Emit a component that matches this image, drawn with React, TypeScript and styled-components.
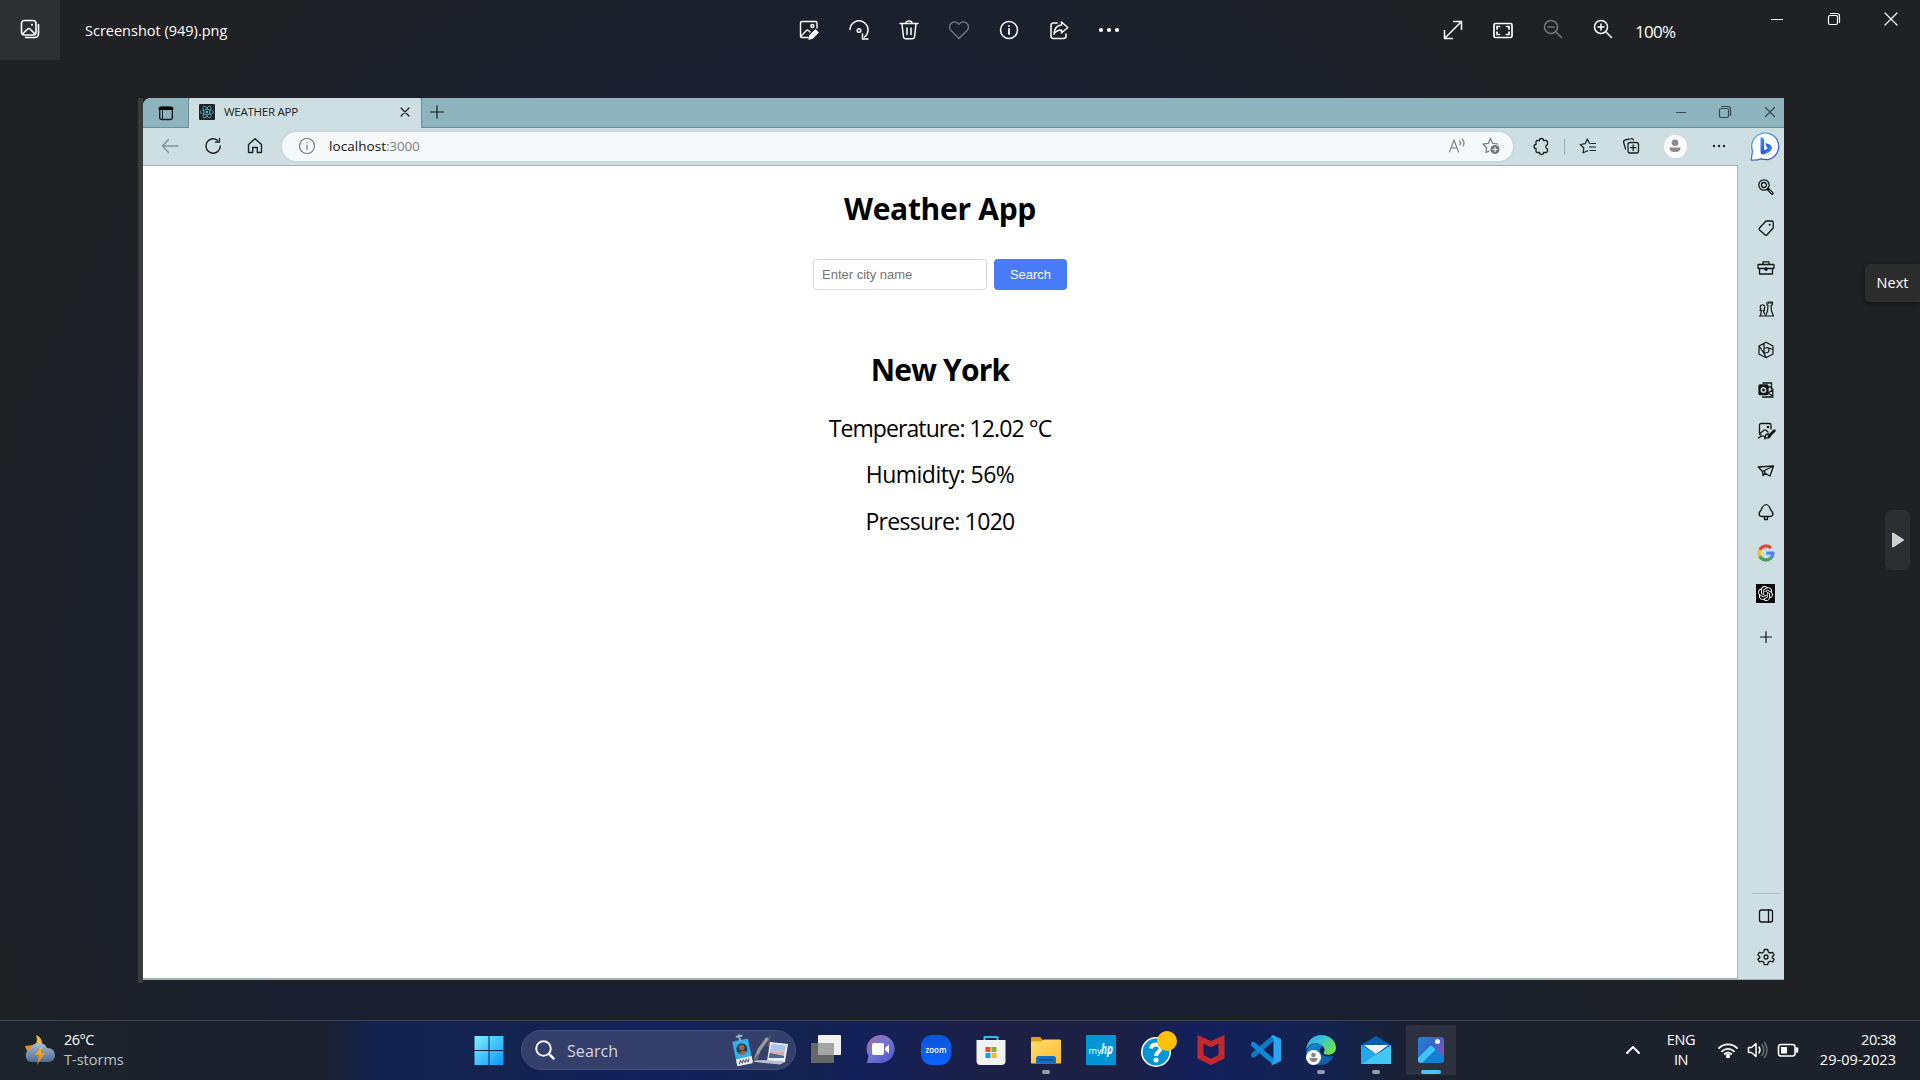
import React from 'react';
import styled, { createGlobalStyle } from 'styled-components';
import { SiReact, SiOpenai } from 'react-icons/si';

const Global = createGlobalStyle`
  * { box-sizing: border-box; }
  html, body { margin: 0; padding: 0; background: #202124; }
  body { width: 1920px; height: 1080px; overflow: hidden; font-family: "Open Sans", "Noto Sans", sans-serif; }
  h1, h2, p { margin: 0; }
`;

const Screen = styled.div`
  width: 1920px;
  height: 1080px;
  display: flex;
  flex-direction: column;
  color: #fff;
  background:
    radial-gradient(ellipse 900px 900px at 850px 700px, #1a2032 0%, #1a2030 70%, rgba(26, 32, 48, 0) 100%),
    linear-gradient(90deg, #202124 0, #202124 1920px);
`;

const Label = styled.span<{ $size: number; $track?: number; $color?: string; $line?: number }>`
  font-size: ${p => p.$size}px;
  letter-spacing: ${p => p.$track ?? 0}px;
  color: ${p => p.$color ?? '#fff'};
  line-height: ${p => p.$line ?? 20}px;
  white-space: nowrap;
`;

const Glyph = styled.svg<{ $dim?: boolean }>`
  display: block;
  flex: none;
  fill: none;
  stroke: currentColor;
  stroke-linecap: round;
  stroke-linejoin: round;
  opacity: ${p => (p.$dim ? 0.38 : 1)};
`;

/* Icons are drawn around a centred origin, one unit per pixel. */
function Icon({ s = 24, w = 1.5, dim, children }: { s?: number; w?: number; dim?: boolean; children: React.ReactNode }) {
  return (
    <Glyph $dim={dim} width={s} height={s} viewBox={`${-s / 2} ${-s / 2} ${s} ${s}`} strokeWidth={w}>
      {children}
    </Glyph>
  );
}

/* ---------- Photo viewer header ---------- */
const Header = styled.header`
  height: 60px;
  display: flex;
  align-items: stretch;
`;
const AppButton = styled.div`
  width: 60px;
  padding-bottom: 2px;
  background: #2e2f32;
  display: flex;
  align-items: center;
  justify-content: center;
`;
const FileName = styled.div`
  width: 724px;
  padding: 19px 0 0 25px;
`;
const Cells = styled.div<{ $width: number; $drop?: number }>`
  width: ${p => p.$width}px;
  padding-top: ${p => p.$drop ?? 0}px;
  display: grid;
  grid-auto-flow: column;
  grid-auto-columns: 50px;
  place-items: center;
`;
const ZoomLevel = styled.div`
  width: 120px;
  padding: 21px 0 0 7px;
`;
const WindowButtons = styled.div<{ $cell: number; $height: number; $color: string; $bleed?: number }>`
  height: ${p => p.$height}px;
  margin-right: ${p => -(p.$bleed ?? 0)}px;
  display: grid;
  grid-template-columns: repeat(3, ${p => p.$cell}px);
  place-items: center;
  color: ${p => p.$color};
`;

/* ---------- Canvas ---------- */
const Canvas = styled.main`
  flex: 1;
  display: flex;
  align-items: flex-start;
  padding: 38px 0 0 138px;
`;
const Photo = styled.div`
  width: 1646px;
  height: 885px;
  padding-left: 5px;
  background: linear-gradient(90deg, #3b3b3b 5px, #202326 5px);
`;
const Browser = styled.div`
  height: 882px;
  border-radius: 8px 0 0 0;
  overflow: hidden;
  display: flex;
  flex-direction: column;
  background: #cedfe3;
  color: #1b1f21;
`;
const TabStrip = styled.div`
  height: 30px;
  display: flex;
  background: #8db4bc;
  box-shadow: inset 0 -1px 0 #6c9096;
`;
const TabMenu = styled.div`
  width: 46px;
  padding-bottom: 1px;
  display: flex;
  align-items: center;
  justify-content: center;
  border-right: 1px solid #6c9096;
  border-radius: 0 0 3px 0;
`;
const Tab = styled.div`
  width: 232px;
  display: flex;
  align-items: center;
  padding: 0 8px 2px 10px;
  background: #cedfe3;
  border-radius: 3px 3px 0 0;
`;
const Favicon = styled.div`
  width: 16px;
  height: 16px;
  margin-right: 9px;
  display: grid;
  place-items: center;
  background: #20232a;
  color: #61b4cc;
  border-radius: 1px;
`;
const TabTitle = styled.div`
  flex: 1;
  display: flex;
`;
const NewTab = styled.div`
  flex: 1;
  padding: 0 0 2px 3px;
  display: flex;
  align-items: center;
  border-left: 1px solid #6c9096;
  border-radius: 0 0 0 3px;
`;
const Toolbar = styled.div`
  height: 37px;
  display: flex;
  align-items: center;
  padding: 0 0 1px 6px;
`;
const Tool = styled.div<{ $w: number; $color?: string }>`
  width: ${p => p.$w}px;
  flex: none;
  display: flex;
  justify-content: center;
  color: ${p => p.$color ?? '#1b1f21'};
`;
const Address = styled.div`
  flex: none;
  width: 1231px;
  height: 29px;
  margin: 0 6px;
  padding: 0 5px 0 9px;
  display: flex;
  align-items: center;
  border-radius: 15px;
  background: #f5f9fa;
  box-shadow: 0 0 3px rgba(90, 140, 150, 0.25);
`;
const Url = styled.div`
  flex: 1;
  padding-left: 6px;
  display: flex;
`;
const Divider = styled.div`
  width: 1px;
  height: 15px;
  background: #9fb0b4;
`;
const Avatar = styled.div`
  width: 23px;
  height: 23px;
  border-radius: 50%;
  background: #fbfbfb;
  color: #8b8b8b;
  display: grid;
  place-items: center;
`;
const Body = styled.div`
  flex: 1;
  display: flex;
`;
const Page = styled.div`
  width: 1595px;
  background: #fff;
  border: solid #a3b1b0;
  border-width: 1px 1px 2px 0;
  border-right-color: #abb9bb;
  color: #000;
  display: flex;
  flex-direction: column;
  align-items: center;
`;
const Title = styled.h1<{ $top: number; $track: number }>`
  margin-top: ${p => p.$top}px;
  font-size: 30px;
  line-height: 41px;
  font-weight: 700;
  letter-spacing: ${p => p.$track}px;
`;
const SearchForm = styled.form`
  margin-top: 30px;
  display: flex;
  gap: 7px;
`;
const CityInput = styled.input`
  width: 174px;
  height: 31px;
  padding: 0 8px;
  border: 1px solid #d8d8d8;
  border-radius: 4px;
  outline: none;
  font: 13px "Liberation Sans", Arial, sans-serif;
  &::placeholder { color: #757575; opacity: 1; }
`;
const SubmitButton = styled.button`
  width: 73px;
  height: 31px;
  padding: 0;
  border: 0;
  border-radius: 4px;
  background: #487bf8;
  color: #fff;
  font: 13px "Liberation Sans", Arial, sans-serif;
`;
const Readings = styled.section`
  margin-top: 15px;
`;
const Reading = styled.p<{ $track: number }>`
  font-size: 23px;
  line-height: 46.4px;
  letter-spacing: ${p => p.$track}px;
  text-align: center;
`;
const Sidebar = styled.aside`
  flex: 1;
  padding: 2px 0 2px 9px;
  display: flex;
  flex-direction: column;
  align-items: center;
  color: #111516;
  border-bottom: 1px solid #a3b1b0;
`;
const SideItem = styled.div<{ $h?: number }>`
  height: ${p => p.$h ?? 40.6}px;
  display: flex;
  align-items: center;
`;
const SideRule = styled.div`
  width: 27px;
  height: 1px;
  margin-top: auto;
  margin-bottom: 2px;
  background: #aebfc3;
`;
const SideTile = styled.div`
  width: 19px;
  height: 19px;
  display: grid;
  place-items: center;
  background: #000;
  color: #fff;
`;

/* ---------- Next control, floating over the canvas ---------- */
const Tooltip = styled.div`
  position: absolute;
  left: 1865px;
  top: 264px;
  width: 55px;
  height: 38px;
  display: grid;
  place-items: center;
  border-radius: 5px 0 0 5px;
  background: #2c2c2d;
  box-shadow: 0 2px 5px rgba(0, 0, 0, 0.4);
`;
const NextButton = styled.div`
  position: absolute;
  left: 1885px;
  top: 510px;
  width: 25px;
  height: 60px;
  display: grid;
  place-items: center;
  border-radius: 6px;
  background: #2d2e31;
  color: #cfcfcf;
`;

/* ---------- Taskbar ---------- */
const Taskbar = styled.footer`
  height: 60px;
  display: flex;
  align-items: stretch;
  border-top: 1px solid #42454c;
  background: linear-gradient(90deg, #1d232c 0, #1b212d 320px, #132350 375px, #14234f 480px, #14205c 660px, #14234f 800px, #14205a 860px, #1b2044 1000px, #1b2044 1120px, #14205c 1200px, #13234f 1330px, #1b202f 1420px, #1c212c 1500px, #1d212b 1920px);
`;
const Weather = styled.div`
  width: 461px;
  padding: 0 0 2px 24px;
  display: flex;
  align-items: center;
  gap: 8px;
`;
const Stack = styled.div<{ $align?: string }>`
  display: flex;
  flex-direction: column;
  align-items: ${p => p.$align ?? 'flex-start'};
`;
const TaskItem = styled.div<{ $active?: boolean; $running?: boolean }>`
  width: 55px;
  display: grid;
  grid-template-rows: 50px 4px;
  align-content: start;
  justify-items: center;
  padding-top: 4px;
  background: ${p => (p.$active ? 'linear-gradient(rgba(255,255,255,.08), rgba(255,255,255,.08)) 3px 4px / 50px 50px no-repeat' : 'none')};
  & > svg { margin-top: 5px; }
  &::after {
    content: '';
    width: ${p => (p.$active ? 20 : 8)}px;
    height: 4px;
    margin-top: -5px;
    border-radius: 2px;
    background: ${p => (p.$active ? '#4cc2ff' : p.$running ? '#989bac' : 'transparent')};
  }
`;
const SearchBox = styled.div`
  width: 275px;
  height: 40px;
  margin: 9px 2px 0 5px;
  padding: 0 6px 0 12px;
  display: flex;
  align-items: center;
  border-radius: 20px;
  border: 1px solid #46507a;
  background: #343f6b;
  color: #f0f0f5;
`;
const SearchText = styled.div`
  flex: 1;
  padding: 1px 0 0 11px;
`;
const Tray = styled.div`
  flex: 1;
  display: flex;
  align-items: center;
  justify-content: flex-end;
  padding: 0 24px 1px 0;
`;
const TrayCell = styled.div<{ $w: number; $end?: boolean }>`
  width: ${p => p.$w}px;
  display: flex;
  justify-content: ${p => (p.$end ? 'flex-end' : 'center')};
`;

const RestoreGlyph = ({ s = 14 }: { s?: number }) => (
  <Icon s={s} w={1.2}><rect x={-5.5} y={-3.5} width={9} height={9} rx={1.5} /><path d="M-3.5-5.5H3a2.5 2.5 0 0 1 2.500 2.500V3.500" /></Icon>
);
const CloseGlyph = ({ r = 6 }: { r?: number }) => (
  <Icon s={16} w={1.2}><path d={`M${-r} ${-r}L${r} ${r}M${r} ${-r}L${-r} ${r}`} /></Icon>
);

const HeaderActions = () => (
  <Cells $width={644}>
    <Icon w={1.4}>
      <path d="M-1 7.500H-7A1.500 1.500 0 0 1-8.500 6V-7A1.500 1.500 0 0 1-7-8.500H6.500A1.500 1.500 0 0 1 8-7V-2" />
      <path d="M-8 6L-2.500.5Q-1.500-.4-.5.5L1 2" /><circle cx={3.300} cy={-4} r={1.500} />
      <path fill="currentColor" d="M0 9L1 5.500 6.500 0 9 2.500 3.500 8Z" />
    </Icon>
    <Icon w={1.500}><path d="M-9-.5A9 9 0 1 1 5.500 7M3.500 4V9H9" /><circle r={1.800} cy={.5} /></Icon>
    <Icon w={1.500}><path d="M-9-6.500H9M-3-7Q-3-9 0-9T3-7M-7-6L-5.500 7Q-5.300 8.800-3.500 8.800H3.500Q5.300 8.800 5.500 7L7-6M-2-2V4.500M2-2V4.500" /></Icon>
    <Icon dim w={1.500}><path d="M0 8.500L-8 .5A5 5 0 0 1-1-6.700L0-5.700 1-6.700A5 5 0 0 1 8 .5Z" /></Icon>
    <Icon w={1.500}><circle r={8.500} /><path d="M0-1V4M0-4V-3.900" strokeWidth={1.800} /></Icon>
    <Icon w={1.500}>
      <path d="M-2-7H-5.500A2.500 2.500 0 0 0-8-4.500V6A2.500 2.500 0 0 0-5.500 8.500H4.500A2.500 2.500 0 0 0 7 6V4" />
      <path d="M2.500-8L8.800-2.500 2.500 3V0Q-3 0-5 4.200-4.500-4.500 2.500-5Z" />
    </Icon>
    <Icon><g fill="currentColor" stroke="none"><circle cx={-8} r={2.100} /><circle r={2.100} /><circle cx={8} r={2.100} /></g></Icon>
  </Cells>
);

const ViewActions = () => (
  <Cells $width={200}>
    <Icon w={1.500}><path d="M-8 8L8-8M0-8.500H8.500V0M-8.500 0V8.500H0" strokeLinecap="butt" /></Icon>
    <Icon w={1.700}><rect x={-9} y={-6.500} width={18} height={14} rx={1.500} /><path d="M-6-1V-3.500H-3.500M3.500-3.500H6V-1M6 2V4.500H3.500M-3.500 4.500H-6V2" /></Icon>
    <Icon dim w={1.500}><circle cx={-2} cy={-3} r={6.500} /><path d="M3 2L8.500 7.500M-5-3H1" /></Icon>
    <Icon w={1.500}><circle cx={-2} cy={-3} r={6.500} /><path d="M3 2L8.500 7.500M-5-3H1M-2-6V0" /></Icon>
  </Cells>
);

const BrowserTools = () => (
  <>
    <Tool $w={43}>
      <Icon s={20} w={1.300}><path d="M-1.500-5.500A2 2 0 0 1 2.500-5.500H5A1.500 1.500 0 0 1 6.500-4V-1.500A2.200 2.200 0 0 0 6.500 2.800V5A1.500 1.500 0 0 1 5 6.500H2.500A2 2 0 0 1-1.500 6.500H-3.500A1.500 1.500 0 0 1-5 5V2.500A2 2 0 0 1-5-1.500V-4A1.500 1.500 0 0 1-3.500-5.500Z" /></Icon>
    </Tool>
    <Tool $w={4}><Divider /></Tool>
    <Tool $w={44}>
      <Icon s={20} w={1.200}><path d="M-.2 4.800L-5 6.800-4.200 2-7.700-1.500-2.900-2.300-.7-6.900 1.500-2.500M3-2.500H7.500M1.500 1H7.500M2 4.500H7.500" /></Icon>
    </Tool>
    <Tool $w={42}>
      <Icon s={20} w={1.300}><rect x={-3} y={-3.500} width={10.500} height={10.500} rx={2} /><path d="M-.5 1.700H5M2.200-1V4.500M-5.500 3L-7.300-3.500A2 2 0 0 1-6-6L0-7.300A2 2 0 0 1 2.500-6" /></Icon>
    </Tool>
    <Tool $w={46}>
      <Avatar><Icon s={16} w={0}><g fill="currentColor"><circle cy={-3.300} r={3.300} /><path d="M-5.500 1.500H5.500Q5.500 6 0 6T-5.500 1.500Z" /></g></Icon></Avatar>
    </Tool>
    <Tool $w={42}><Icon s={16} w={0}><g fill="currentColor"><circle cx={-5} r={1.200} /><circle r={1.200} /><circle cx={5} r={1.200} /></g></Icon></Tool>
    <Tool $w={50}>
      <Icon s={30} w={1.300}>
        <defs>
          <linearGradient id="bubble" x1="0" y1="0" x2="0.7" y2="1"><stop offset="0" stopColor="#54c1ec" /><stop offset="1" stopColor="#3c49c7" /></linearGradient>
          <linearGradient id="bing" x1="0" y1="0" x2="1" y2="1"><stop offset="0" stopColor="#3aa0f5" /><stop offset=".55" stopColor="#2f55dd" /><stop offset="1" stopColor="#38bdf0" /></linearGradient>
        </defs>
        <path fill="#fff" stroke="url(#bubble)" d="M-13.800 14L-12.500 5A13.500 13.500 0 1 1 3 13.600Q-2 13.500-4 12.800-8 14.500-13.800 14Z" />
        <path fill="url(#bing)" stroke="none" d="M-4.500-8.800Q-.8-8.500-.8-5.500V4.500L2.800 2.300Q1 0 .3-3 7.500-1.500 7 2.500 6.500 6-1 8.300-4.500 9-4.500 5Z" />
      </Icon>
    </Tool>
  </>
);

const SidebarIcons = () => (
  <>
    <SideItem><Icon s={20} w={1.300}><circle cx={-2} cy={-2} r={5.200} /><circle cx={-2} cy={-2} r={2.500} /><path d="M2 2.200L6.300 6.300" strokeWidth={3} /><path d="M3.500 3.600L6 6" stroke="#cedfe3" strokeWidth={1} /></Icon></SideItem>
    <SideItem><Icon s={20} w={1.300}><path d="M0-7H6A1.200 1.200 0 0 1 7.200-6V0L.8 7Q0 7.800-.8 7L-6.500 2Q-7.400 1-6.500 0Z" /><circle cx={3.600} cy={-3.300} r={1} fill="currentColor" stroke="none" /></Icon></SideItem>
    <SideItem><Icon s={20} w={1.300}><rect x={-8} y={-3.500} width={16} height={4} rx={.5} /><path d="M-6.500.5V6H6.500V.5M-3-4V-6.200H3V-4" /><circle r={1.200} cy={1} fill="currentColor" /></Icon></SideItem>
    <SideItem><Icon s={20} w={1.200}><path d="M-6.800 7H-.5M-5.300 7Q-5.300 4-4.500 1.500H-6L-5-.2A2.300 2.300 0 1 1-2-.2L-1.300 1.500H-2.800L-1.500 5M1-7V-4.500L2-3.500 1.500 2-.5 7H7.500L5.500 2 5-3.500 6.500-4.500V-7H5V-5.500M2.800-7V-5.500M4.500-7H2.500" /></Icon></SideItem>
    <SideItem><Icon s={20} w={1.200}><path d="M0-7.800L7-4V4L0 7.800-7 4V-4ZM-2-6.500V3.500L0 7M-2-1.500L1.500-2.500 6.500-.5M-2 3.500L2.500 2 3-1.500M-6.500-3.500L-2 3.500" /></Icon></SideItem>
    <SideItem><Icon s={20} w={1.300}><path d="M-3-7H5.500V-1M1-3H5.500M6.800-1V7H-3.500M6.800 0L2 3 6.800 6" /><rect x={-7} y={-5} width={9} height={9.500} rx={1} fill="currentColor" /><circle cx={-2.500} cy={0} r={2.200} stroke="#cedfe3" strokeWidth={1.400} /></Icon></SideItem>
    <SideItem><Icon s={20} w={1.300}><path d="M5-2V-6A1.500 1.500 0 0 0 3.500-7.500H-5A1.500 1.500 0 0 0-6.500-6V2.500Q-6.500 4-5 4M-6 2.500L-2-.8Q-1-1.500 0-.8L2 1" /><circle cx={2} cy={-4} r={.7} fill="currentColor" /><path d="M8.300-.3L3 5" strokeWidth={2.800} /><path d="M2.500 3Q-1 3-.8 6 1.500 8.500 4.500 5.200M-7.700 7Q-4 4.500-2.500 5T-1 8" /></Icon></SideItem>
    <SideItem><Icon s={20} w={1.300}><path d="M-7.800-4L7.500-5 4 5-1 2.200-1.500-.5 7.500-5-3.500.5-7.800-4M-3.500.5L-3 4.500-1 2.200" /></Icon></SideItem>
    <SideItem><Icon s={20} w={1.300}><path d="M0-7.500Q3.500-6.500 4.500-2.500 7 0 7 2.500 6.500 4.500 4 4.500H-4Q-6.500 4.500-7 2.500-7 0-4.500-2.500-3.500-6.500 0-7.500ZM-1.500 5V7.500H1.500V5" /></Icon></SideItem>
    <SideItem>
      <Icon s={20} w={3.300}>
        <g strokeLinecap="butt"><path stroke="#dc4b3e" d="M5-5A7 7 0 0 0-6.200-3.200" /><path stroke="#f4bd2f" d="M-6.100-3.400A7 7 0 0 0-6.100 3.400" /><path stroke="#4ba35a" d="M-6.200 3.200A7 7 0 0 0 4.600 5.300" /><path stroke="#5383ec" d="M4.400 5.400A7 7 0 0 0 7 .2H.2" /></g>
      </Icon>
    </SideItem>
    <SideItem><SideTile><SiOpenai size={15} /></SideTile></SideItem>
    <SideItem $h={47}><Icon s={16} w={1.200}><path d="M-5.500 0H5.500M0-5.500V5.500" /></Icon></SideItem>
    <SideRule />
    <SideItem><Icon s={20} w={1.300}><rect x={-6.500} y={-6} width={13} height={12} rx={2} /><path d="M2.500-6V6" /></Icon></SideItem>
    <SideItem><Icon s={20} w={1.300}><path d="M-1.700-7.500H1.700L2.400-4.900 4-4 6.600-4.700 8.100-2 6.200-.1V.7L8.100 2.200 6.600 5 4 4.200 2.400 5.100 1.700 7.700H-1.700L-2.400 5.100-4 4.200-6.600 5-8.100 2.200-6.200.7V-.1L-8.100-2-6.600-4.700-4-4-2.400-4.900Z" /><circle r={2} /></Icon></SideItem>
  </>
);

const TaskApps = () => (
  <>
    <TaskItem>
      <Icon s={40} w={0}><rect x={-15} y={-7} width={23} height={20} rx={1} fill="#666769" /><rect x={-8} y={-15} width={23} height={20} rx={1} fill="#f1f1f1" /><rect x={-8} y={-7} width={16} height={12} fill="#a5a5a6" /></Icon>
    </TaskItem>
    <TaskItem>
      <Icon s={40} w={0}>
        <defs><linearGradient id="chat" x1="0" y1="0" x2=".8" y2="1"><stop offset="0" stopColor="#a66ba4" /><stop offset=".5" stopColor="#7476d2" /><stop offset="1" stopColor="#5059c9" /></linearGradient></defs>
        <path fill="url(#chat)" d="M-14 13L-12.500 6A14 14 0 1 1 0 13Z" /><rect x={-9} y={-7} width={12} height={12} rx={2} fill="#fff" /><path fill="#fff" d="M4-2L8-5.500V3.500L4 0Z" />
      </Icon>
    </TaskItem>
    <TaskItem>
      <Icon s={40} w={0}>
        <defs><linearGradient id="zoomBg" x1="0" y1="0" x2="0" y2="1"><stop offset="0" stopColor="#0955d8" /><stop offset="1" stopColor="#0b63ff" /></linearGradient></defs>
        <rect x={-15} y={-15} width={30} height={30} rx={11} fill="url(#zoomBg)" />
        <text x={0} y={2.500} textAnchor="middle" fill="#fff" fontSize={8.500} fontWeight={600} textLength={21} lengthAdjust="spacingAndGlyphs">zoom</text>
      </Icon>
    </TaskItem>
    <TaskItem>
      <Icon s={40} w={0}>
        <path d="M-6.500-9V-13H6.500V-9" stroke="#35bdf0" strokeWidth={2} fill="none" /><path fill="#f2f2f2" d="M-14.500-10H14.500V11Q14.500 15 10.500 15H-10.500Q-14.500 15-14.500 11Z" />
        <rect x={-5.500} y={-3} width={5} height={5} fill="#e6502b" /><rect x={.5} y={-3} width={5} height={5} fill="#7ab51d" /><rect x={-5.500} y={3} width={5} height={5} fill="#139fe0" /><rect x={.5} y={3} width={5} height={5} fill="#fbb812" />
      </Icon>
    </TaskItem>
    <TaskItem $running>
      <Icon s={40} w={0}>
        <defs><linearGradient id="folder" x1="0" y1="0" x2="1" y2="1"><stop offset="0" stopColor="#ffdc73" /><stop offset="1" stopColor="#fcbc27" /></linearGradient></defs>
        <path fill="#dfa00c" d="M-15-12Q-15-13-14-13H-6L-3-10H15V0H-15Z" /><path fill="url(#folder)" d="M-15-8.500H-5L-2-10.500H14L15-9.500V13.500H-15Z" />
        <path fill="#0f70c5" d="M-10 13.500V8.500Q-10 6-7.500 6H7.500Q10 6 10 8.500V13.500Z" /><rect x={-7} y={9} width={14} height={1.500} fill="#0a4d94" />
      </Icon>
    </TaskItem>
    <TaskItem>
      <Icon s={40} w={0}>
        <rect x={-15} y={-15} width={30} height={30} rx={1} fill="#0096d6" />
        <text x={-12.500} y={3.500} fill="#fff" fontSize={9.500} textLength={13} lengthAdjust="spacingAndGlyphs">my</text>
        <text x={0} y={4} fill="#fff" fontSize={15} fontStyle="italic" fontWeight={700} textLength={12} lengthAdjust="spacingAndGlyphs">hp</text>
      </Icon>
    </TaskItem>
    <TaskItem>
      <Icon s={44} w={0}>
        <circle r={14.200} fill="#0096d6" stroke="#fff" strokeWidth={1.600} />
        <path d="M-5-3.500Q-4.500-7.500 0-7.500T4.500-3.500C4.500-.5 0 0 0 4" stroke="#fff" strokeWidth={4} strokeLinecap="butt" fill="none" /><circle cy={8} r={2.500} fill="#fff" />
        <circle cx={11} cy={-11} r={10} fill="#fdc10c" />
      </Icon>
    </TaskItem>
    <TaskItem><Icon s={40} w={0}><path fill="#c2282d" d="M-13.500-15L0-9 13.500-15V8.500L0 15-13.500 8.500ZM-7.500-6.500V5L0 8.800 7.500 5V-6.500L0-2.800Z" fillRule="evenodd" /></Icon></TaskItem>
    <TaskItem>
      <Icon s={40} w={0}><path stroke="#0a79c6" strokeWidth={5} d="M-12.500 5L6-11" /><path stroke="#0b8ad8" strokeWidth={5} d="M-12.500-5.500L6 10.500" /><path fill="#2aa5f0" d="M7-15L15-11V11L7 15 5 14 7.500 11V-11L5-14Z" /></Icon>
    </TaskItem>
    <TaskItem $running>
      <Icon s={40} w={0}>
        <defs>
          <linearGradient id="edgeTop" x1="0" y1="0" x2="1" y2=".5"><stop offset="0" stopColor="#2aa6e3" /><stop offset=".5" stopColor="#35c1d8" /><stop offset="1" stopColor="#6be34f" /></linearGradient>
          <linearGradient id="edgeLow" x1="0" y1="0" x2="1" y2="1"><stop offset="0" stopColor="#1b8fd8" /><stop offset="1" stopColor="#0c4f9e" /></linearGradient>
        </defs>
        <path fill="url(#edgeLow)" d="M-15 2A13 13 0 0 1 4-5Q-2-3-1 2 1 8 13 6 8 15 0 15-12 14.500-15 2Z" />
        <path fill="url(#edgeTop)" d="M-15 0C-14-10-7-15 0-15 9-15 15-9 15-2 15 4 8 6 3 4 2 3 4 2 3.500-1 2-6-4-8-9-6-13-4-15 0-15 0Z" />
        <circle cx={-7.500} cy={7.500} r={7.500} fill="#fff" /><circle cx={-7.500} cy={5} r={2.300} fill="#858585" /><path fill="#858585" d="M-11.500 8H-3.500Q-4 12-7.500 12T-11.500 8Z" />
      </Icon>
    </TaskItem>
    <TaskItem $running>
      <Icon s={40} w={0}><path fill="#0a5cad" d="M-15-5L0-14 15-5V5H-15Z" /><path fill="#1b9ae3" d="M-15-5L0 4.500-15 14Z" /><path fill="#22a9ea" d="M-15-5L0 4 15 14H-15Z" /><path fill="#41c7f5" d="M15-5L-14 14H15Z" /><path fill="#f0f0f0" d="M-12.500-5H12.500L0 4Z" /></Icon>
    </TaskItem>
    <TaskItem $active>
      <Icon s={40} w={0}>
        <defs>
          <linearGradient id="photos" x1="0" y1="0" x2="1" y2=".6"><stop offset="0" stopColor="#1b86dc" /><stop offset=".6" stopColor="#3c62c4" /><stop offset="1" stopColor="#8b55b5" /></linearGradient>
          <clipPath id="photoFrame"><rect x={-13} y={-13} width={26} height={26} rx={3} /></clipPath>
        </defs>
        <g clipPath="url(#photoFrame)">
          <rect x={-13} y={-13} width={26} height={26} fill="url(#photos)" />
          <path fill="#1380d6" d="M-9 13L2-4.500 14 8V13Z" />
          <path fill="#42c5f2" d="M-13 8L-1.500-3.500Q0-5 1.500-3.500L4.500-.5-9 13H-13Z" />
        </g>
        <circle cx={6.500} cy={-8.500} r={2.500} fill="#eef3ff" />
      </Icon>
    </TaskItem>
  </>
);

export default function App() {
  return (
    <Screen>
      <Global />
      <Header>
        <AppButton>
          <Icon w={1.600}><rect x={-8.500} y={-8.500} width={14.500} height={14.500} rx={3} /><circle cx={2} cy={-4.300} r={1} fill="currentColor" stroke="none" /><path d="M-7.500 5L-2.300 0Q-1.200-1 0 0L5 5M8.500-4.500V4.500Q8.500 8.500 4.500 8.500H-4.500" /></Icon>
        </AppButton>
        <FileName><Label $size={14.500}>Screenshot (949).png</Label></FileName>
        <HeaderActions />
        <ViewActions />
        <ZoomLevel><Label $size={17} $track={-0.700} $line={21}>100%</Label></ZoomLevel>
        <WindowButtons $cell={57.200} $height={38} $color="#fff">
          <Icon s={16} w={1.200}><path d="M-5.500.5H5.500" /></Icon>
          <RestoreGlyph />
          <CloseGlyph />
        </WindowButtons>
      </Header>

      <Canvas>
        <Photo>
          <Browser>
            <TabStrip>
              <TabMenu><Icon s={16} w={1.400}><rect x={-6.300} y={-6} width={12.600} height={12.500} rx={2} /><path d="M-6-4.500H6" strokeWidth={3} stroke="#000" /><path d="M-3.500-3V6" strokeWidth={1} /></Icon></TabMenu>
              <Tab>
                <Favicon><SiReact size={14} /></Favicon>
                <TabTitle><Label $size={11.500} $track={-0.250} $color="#1b1f21">WEATHER APP</Label></TabTitle>
                <CloseGlyph r={4} />
              </Tab>
              <NewTab><Icon s={24} w={1.200}><path d="M-6.500 0H6.500M0-6.500V6.500" /></Icon></NewTab>
              <WindowButtons $cell={44.500} $height={28} $color="#37494d" $bleed={8}>
                <Icon s={16} w={1}><path d="M-4.500.5H4.500" /></Icon>
                <RestoreGlyph />
                <CloseGlyph r={4.500} />
              </WindowButtons>
            </TabStrip>
            <Toolbar>
              <Tool $w={42} $color="#7f9296"><Icon s={20} w={1.300}><path d="M8 0H-7.500M-1.500-6.500L-7.500 0-1.500 6.500" /></Icon></Tool>
              <Tool $w={43}><Icon s={20} w={1.400}><path d="M4.500-5.700A7.200 7.200 0 1 0 7.300 0M2.500-4H6.500V-7.500" /></Icon></Tool>
              <Tool $w={42}><Icon s={20} w={1.400}><path d="M-6.500 6V-1.500L0-7.200 6.500-1.500V6Q6.500 6.500 6 6.500H2.300V1.500H-2.300V6.500H-6Q-6.500 6.500-6.500 6Z" /></Icon></Tool>
              <Address>
                <Tool $w={32} $color="#72797b"><Icon s={20} w={1.200}><circle r={7.500} /><path d="M0-.8V3.500M0-3.500V-3.300" /></Icon></Tool>
                <Url><Label $size={13.500} $track={0.050} $color="#111">localhost</Label><Label $size={13.500} $track={-0.200} $color="#7b8081">:3000</Label></Url>
                <Tool $w={35} $color="#7c8183"><Icon s={20} w={1.200}><path d="M-7.500 6L-3-6 1.500 6M-6 2H0M2.500-5Q4.500-3 3-1M5-7Q8.500-3.500 6 0" /></Icon></Tool>
                <Tool $w={34} $color="#70767a"><Icon s={20} w={1.200}><path d="M-2 5L-5 6.500-4.300 2-8-2-2.800-2.600-.5-7.500 1.800-2.600 7-2" /><circle cx={4} cy={3.500} r={4.500} fill="currentColor" stroke="none" /><path d="M2 3.500H6M4 1.500V5.500" stroke="#fff" /></Icon></Tool>
              </Address>
              <BrowserTools />
            </Toolbar>
            <Body>
              <Page>
                <Title $top={22} $track={-0.300}>Weather App</Title>
                <SearchForm>
                  <CityInput placeholder="Enter city name" />
                  <SubmitButton type="button">Search</SubmitButton>
                </SearchForm>
                <Title as="h2" $top={59} $track={-0.800}>New York</Title>
                <Readings>
                  <Reading $track={-0.900}>Temperature: 12.02 °C</Reading>
                  <Reading $track={-0.500}>Humidity: 56%</Reading>
                  <Reading $track={-0.720}>Pressure: 1020</Reading>
                </Readings>
              </Page>
              <Sidebar><SidebarIcons /></Sidebar>
            </Body>
          </Browser>
        </Photo>
      </Canvas>

      <Tooltip><Label $size={14.500}>Next</Label></Tooltip>
      <NextButton><Icon s={16} w={2}><path fill="currentColor" d="M-5-6.500L5 0-5 6.500Z" /></Icon></NextButton>

      <Taskbar>
        <Weather>
          <Icon s={32} w={0}>
            <defs><linearGradient id="cloud" x1="0" y1="0" x2="0" y2="1"><stop offset="0" stopColor="#a9bdd0" /><stop offset="1" stopColor="#4a6f98" /></linearGradient><linearGradient id="bolt" x1="0" y1="0" x2="0" y2="1"><stop offset="0" stopColor="#fcc02c" /><stop offset="1" stopColor="#ee6c0c" /></linearGradient></defs>
            <path fill="#f6b735" d="M-4-15Q2-13 2-6L-3-3H-7Q-1-8-4-15Z" /><path fill="#f08a1c" d="M-15-4L-7-5-9 3-13 1Z" /><path fill="url(#cloud)" d="M-9 12A6.500 6.500 0 0 1-10-.5Q-8-7-1-7 5-7 7-2 15-2 15 5.500 14.500 12 8 12Z" /><path fill="url(#bolt)" d="M2-4L-5 5H-1L-3 15 5 3H1Z" />
          </Icon>
          <Stack><Label $size={14.500} $track={-0.500}>26°C</Label><Label $size={14.500} $track={0} $color="#bfc2c6">T-storms</Label></Stack>
        </Weather>
        <TaskItem>
          <Icon s={40} w={0}>
            <defs><linearGradient id="win" gradientUnits="userSpaceOnUse" x1={-14} y1={-14} x2={14} y2={14}><stop offset="0" stopColor="#7df0ff" /><stop offset="1" stopColor="#0a98fa" /></linearGradient></defs>
            <path fill="url(#win)" d="M-14.500-14H-.5V0H-14.500ZM.5-14H14.500V0H.5ZM-14.500 1H-.5V15H-14.500ZM.5 1H14.500V15H.5Z" />
          </Icon>
        </TaskItem>
        <SearchBox>
          <Icon s={22} w={2}><circle cx={-1.500} cy={-1.500} r={7.300} /><path d="M4 4L8.500 8.500" strokeWidth={2.500} /></Icon>
          <SearchText><Label $size={16} $track={0.100} $color="#d4d6e0">Search</Label></SearchText>
          <Glyph width={58} height={36} viewBox="0 0 58 36" strokeWidth={0}>
            <g transform="rotate(-12 11 20)"><rect x={3.500} y={8} width={16} height={25} rx={1} fill="#35ade9" /><rect x={3.500} y={26} width={16} height={7} fill="#eceff2" /><circle cx={11.500} cy={17} r={5.500} fill="#1d4256" /><circle cx={11.500} cy={15.500} r={2.800} fill="#9d6744" /><path d="M7.500 21Q11.500 17 15.500 21 11.500 25 7.500 21Z" fill="#9d6744" /><path d="M6 31L7.500 28 9 31 10.500 28 12 31 13.500 28 15 31 16.500 28" stroke="#51565d" strokeWidth={1} /><path d="M11.500 8V3M9 4H14" stroke="#9fb0bf" strokeWidth={2} /></g>
            <path d="M25 26L28 18 36 7" stroke="#9a9a9a" strokeWidth={3.500} /><path d="M22 31L27 23M39 4L37 14" stroke="#5c5c5c" strokeWidth={1.500} />
            <path fill="#e9edf4" d="M39 10L57 12 54 30 36 29Z" /><path fill="#a9c6ea" d="M40.500 12L55 13.500 53.500 20 39 19Z" /><path fill="#dcaea6" d="M39 19L53.500 20 53 26 37.800 26Z" /><path fill="#4c6a93" d="M38.500 21L46 22.500 53 24 53 26 37.800 26Z" /><path fill="#b8c0d2" d="M23 28.500L36 28 54 30 49 32.500 24 30Z" />
          </Glyph>
        </SearchBox>
        <TaskApps />
        <Tray>
          <TrayCell $w={50}><Icon w={2}><path d="M-6 3L0-3 6 3" /></Icon></TrayCell>
          <TrayCell $w={46}><Stack $align="center"><Label $size={14.500} $track={-0.400}>ENG</Label><Label $size={14.500} $track={-0.400}>IN</Label></Stack></TrayCell>
          <TrayCell $w={48}><Icon w={1.800}><path d="M-9-2A12.800 12.800 0 0 1 9-2M-6 1.300A8.500 8.500 0 0 1 6 1.300M-3.300 4A5 5 0 0 1 3.300 4" /><circle cy={6} r={1.300} fill="currentColor" /></Icon></TrayCell>
          <TrayCell $w={12}><Icon w={1.500}><path d="M-9.500-2.500H-6.500L-2-6.500V6.500L-6.500 2.500H-9.500ZM1-3Q3 0 1 3" /><path d="M4-5.500Q7.500 0 4 5.500M6.500-7.500Q11.500 0 6.500 7.500" opacity={.35} /></Icon></TrayCell>
          <TrayCell $w={48}><Icon w={1.600}><rect x={-9.500} y={-5.500} width={16.500} height={11.500} rx={2.500} /><rect x={-7} y={-3} width={6} height={6.500} fill="currentColor" stroke="none" /><path d="M9-1.500V1.500" strokeWidth={2.500} /></Icon></TrayCell>
          <TrayCell $w={84} $end><Stack $align="flex-end"><Label $size={14.500} $track={-0.400}>20:38</Label><Label $size={14.500} $track={0.050}>29-09-2023</Label></Stack></TrayCell>
        </Tray>
      </Taskbar>
    </Screen>
  );
}
